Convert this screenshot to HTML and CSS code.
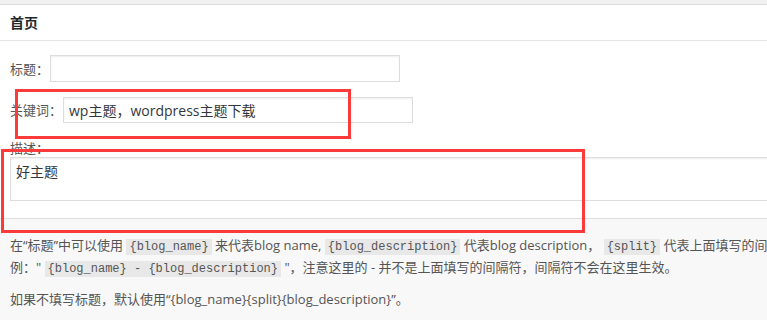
FILE: index.html
```html
<!DOCTYPE html>
<html lang="zh-CN">
<head>
    <meta charset="UTF-8">
    <meta name="viewport" content="width=device-width, initial-scale=1.0">
    <title>首页 SEO 设置</title>
    <link rel="stylesheet" href="styles.css">
</head>
<body>
    <div class="page">
        <div class="postbox">
            <h2 class="box-title">首页</h2>

            <div class="box-body">
                <div class="field-row">
                    <label for="seoTitle">标题：</label>
                    <input type="text" id="seoTitle" class="input-text">
                </div>

                <div class="field-row">
                    <label for="seoKeywords">关键词：</label>
                    <input type="text" id="seoKeywords" class="input-text" value="wp主题，wordpress主题下载">
                </div>

                <div class="field-block">
                    <label for="seoDesc">描述：</label>
                    <textarea id="seoDesc" class="input-area">好主题</textarea>
                </div>
            </div>

            <div class="box-footer">
                <p class="line-keep">在“标题”中可以使用 <code>{blog_name}</code> 来代表blog name, <code>{blog_description}</code> 代表blog description， <code>{split}</code> 代表上面填写的间隔符。<br>例：" <code>{blog_name} - {blog_description}</code> "，注意这里的 - 并不是上面填写的间隔符，间隔符不会在这里生效。</p>
                <p>如果不填写标题，默认使用“{blog_name}{split}{blog_description}”。</p>
            </div>
        </div>

        <!-- 标注框 -->
        <div class="mark mark-keywords"></div>
        <div class="mark mark-desc"></div>
    </div>
</body>
</html>
```

FILE: styles.css
```css
html,
body {
    margin: 0;
    padding: 0;
    overflow: hidden;
    background-color: #f1f1f1;
}
body {
    font-family: "Open Sans", "Noto Sans CJK SC", sans-serif;
    font-size: 13px;
    color: #555;
}
.page {
    position: relative;
    width: 1000px;
    padding-top: 4px;
}
.postbox {
    background-color: #fff;
    border-top: 1px solid #ddd;
    border-bottom: 1px solid #e2e2e2;
}
.box-title {
    margin: 0;
    height: 35px;
    line-height: 35px;
    padding: 0 10px;
    font-size: 14px;
    font-weight: bold;
    color: #23282d;
    border-bottom: 1px solid #e5e5e5;
}
.box-body {
    padding: 14px 10px 17px;
}
.field-row {
    display: flex;
    align-items: center;
    margin-bottom: 15px;
}
.field-row label {
    margin-right: 1px;
    line-height: 18px;
}
.input-text {
    width: 350px;
    height: 27px;
    box-sizing: border-box;
    margin: 0;
    padding: 0 5px;
    border: 1px solid #ddd;
    box-shadow: inset 0 1px 2px rgba(0, 0, 0, 0.07);
    font-family: "Open Sans", "Noto Sans CJK SC", sans-serif;
    font-size: 14px;
    color: #32373c;
    background-color: #fff;
}
#seoKeywords {
    height: 26px;
}
.field-block {
    padding-top: 1px;
}
.field-block label {
    display: block;
    line-height: 18px;
}
.input-area {
    display: block;
    width: 100%;
    height: 44px;
    box-sizing: border-box;
    margin: 0;
    padding: 4px 5px;
    border: 1px solid #ddd;
    box-shadow: inset 0 1px 2px rgba(0, 0, 0, 0.07);
    font-family: "Open Sans", "Noto Sans CJK SC", sans-serif;
    font-size: 14px;
    line-height: 20px;
    color: #32373c;
    resize: none;
}
.box-footer {
    background-color: #f8f8f8;
    border-top: 1px solid #ddd;
    padding: 16px 10px 11px;
}
.box-footer p {
    margin: 0 0 10px;
    line-height: 20px;
}
.box-footer p:last-child {
    margin-bottom: 0;
}
.line-keep {
    white-space: nowrap;
}
code {
    font-family: "Liberation Mono", monospace;
    font-size: 12px;
    padding: 1px 3px;
    background-color: #e8e8e8;
    color: #555;
}
.mark {
    position: absolute;
    border: 3px solid #fb3a3a;
    box-sizing: border-box;
}
.mark-keywords {
    left: 15px;
    top: 89px;
    width: 336px;
    height: 50px;
}
.mark-desc {
    left: 1px;
    top: 149px;
    width: 584px;
    height: 84px;
}
```
